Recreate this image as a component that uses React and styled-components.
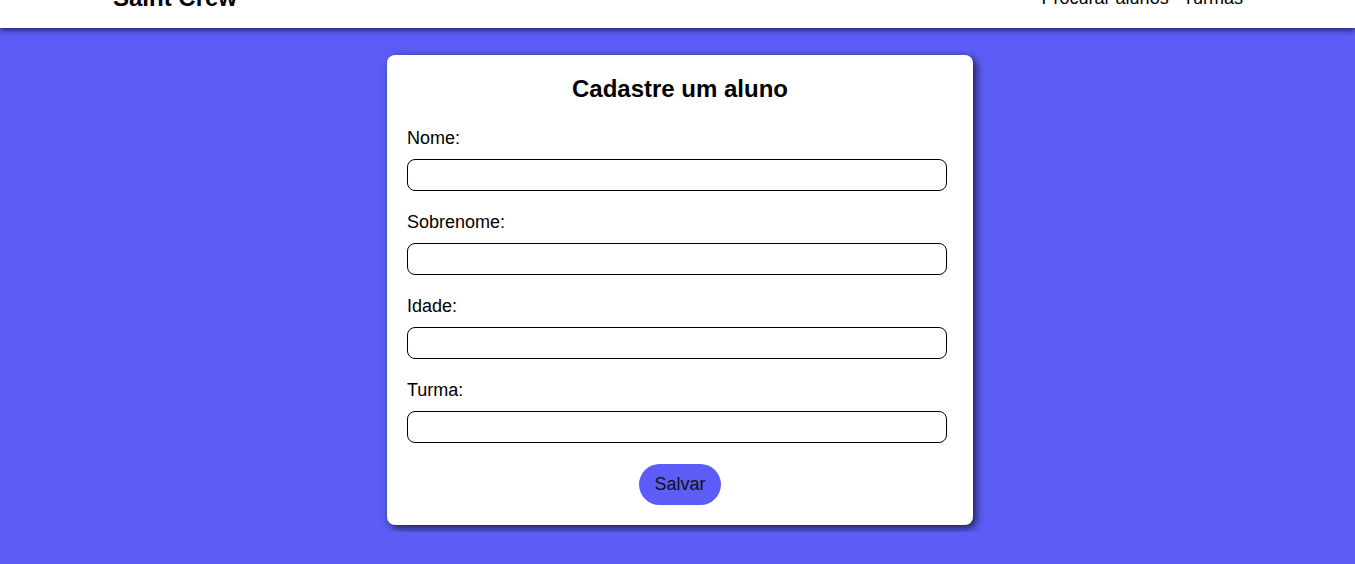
import styled, { createGlobalStyle } from "styled-components";
import React from "react";

const GlobalStyle = createGlobalStyle`
  html, body {
    margin: 0;
    padding: 0;
    background: #5b5df6;
    font-family: "Liberation Sans", Arial, sans-serif;
    color: #000;
  }
  #root {
    min-height: 100vh;
  }
`;

const fields = ["Nome", "Sobrenome", "Idade", "Turma"];

function App() {
  return (
    <>
      <GlobalStyle />
      <Header>
        <Brand>Saint Crew</Brand>
        <Nav>
          <NavLink>Procurar alunos</NavLink>
          <NavLink>Turmas</NavLink>
        </Nav>
      </Header>
      <Main>
        <Card onSubmit={(e) => e.preventDefault()}>
          <Title>Cadastre um aluno</Title>
          <Fields>
            {fields.map((f) => (
              <Field key={f}>
                <Label>{f}:</Label>
                <Input type="text" />
              </Field>
            ))}
          </Fields>
          <Button type="submit">Salvar</Button>
        </Card>
      </Main>
    </>
  );
}

const Header = styled.header`
  height: 60px;
  margin-top: -32px;
  background: white;
  display: flex;
  align-items: center;
  justify-content: space-between;
  padding: 0 112px 0 113px;
  box-shadow: 0 2px 6px rgba(0, 0, 0, 0.65);
  position: relative;
`;

const Brand = styled.div`
  font-size: 24px;
  font-weight: bold;
`;

const Nav = styled.nav`
  display: flex;
  gap: 14px;
`;

const NavLink = styled.span`
  font-size: 18px;
  cursor: pointer;
`;

const Main = styled.main`
  display: flex;
  justify-content: center;
  padding: 27px 0 0 5px;
`;

const Card = styled.form`
  width: 586px;
  box-sizing: border-box;
  background: white;
  border-radius: 8px;
  padding: 20px;
  display: flex;
  flex-direction: column;
  box-shadow: 3px 3px 8px rgba(0, 0, 0, 0.7);
`;

const Title = styled.h2`
  margin: 0 0 25px;
  font-size: 24px;
  text-align: center;
`;

const Fields = styled.div`
  display: flex;
  flex-direction: column;
  gap: 21px;
`;

const Field = styled.div`
  display: flex;
  flex-direction: column;
`;

const Label = styled.label`
  font-size: 18px;
  line-height: 21px;
  margin-bottom: 10px;
`;

const Input = styled.input`
  width: 540px;
  height: 32px;
  box-sizing: border-box;
  border: 1px solid #000;
  border-radius: 8px;
  padding: 0 10px;
  font-size: 16px;
  font-family: inherit;
  outline: none;
`;

const Button = styled.button`
  align-self: center;
  margin-top: 21px;
  height: 41px;
  padding: 0 15px;
  border: none;
  border-radius: 21px;
  background: #5b5df6;
  color: #111;
  font-size: 18px;
  font-family: inherit;
  cursor: pointer;
`;

export default App;
